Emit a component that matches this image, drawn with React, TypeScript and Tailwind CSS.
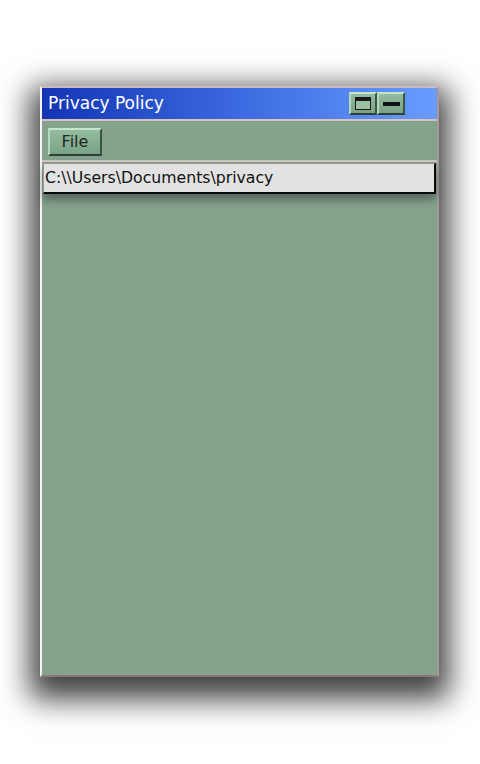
import React from 'react';

// Bevelled green button used in title bar and toolbar
const Bevel: React.FC<{ children: React.ReactNode; className?: string }> = ({ children, className }) => (
  <div
    className={`flex items-center justify-center bg-gradient-to-b from-[#94bca0] to-[#7aa286] border-2 border-t-[#c4e4cc] border-l-[#b4d8bc] border-r-[#3c5444] border-b-[#2c4034] ${className}`}
  >
    {children}
  </div>
);

export default function App() {
  return (
    <div className="w-[480px] h-[764px] bg-white pt-[86px] pl-[40px] font-['DejaVu_Sans',sans-serif]">
      <div className="w-[399px] h-[591px] flex flex-col bg-[#84a28c] border-2 border-t-[#cbbcbc] border-l-[#f4f4f4] border-r-[#a89a9a] border-b-[#8a7878] shadow-[0_12px_28px_10px_rgba(0,0,0,0.75)]">
        {/* Title bar */}
        <div className="h-[33px] flex items-center justify-between pl-[6px] pr-[32px] bg-gradient-to-r from-[#1434b4] via-[#3c6ae0] to-[#6a9cff] border-b-2 border-[#d6c4c4]">
          <span className="text-white text-[17px] leading-none">Privacy Policy</span>
          <div className="flex">
            <Bevel className="w-[28px] h-[23px]">
              <div className="w-[16px] h-[13px] border border-[#1a1a1a] border-t-[4px] bg-[#9cc0a4]" />
            </Bevel>
            <Bevel className="w-[28px] h-[23px]">
              <div className="w-[17px] h-[4px] bg-[#111]" />
            </Bevel>
          </div>
        </div>

        {/* Toolbar */}
        <div className="h-[41px] flex items-center pl-[6px] pt-[2px] border-b-2 border-[#d2c4c4]">
          <Bevel className="w-[54px] h-[28px]">
            <span className="text-[16px] text-[#1c2a20] leading-none">File</span>
          </Bevel>
        </div>

        {/* Path field */}
        <div className="mx-[1px] mt-[1px] h-[31px] flex items-center pl-[1px] bg-[#e2e2e2] border border-t-[#9a9a9a] border-l-[#9a9a9a] border-r-2 border-b-2 border-r-[#0a0a0a] border-b-[#0a0a0a] shadow-[0_6px_8px_rgba(0,0,0,0.35)]">
          <span className="text-[15.7px] text-[#111] leading-none">C:\\Users\Documents\privacy</span>
        </div>

        <div className="flex-1" />
      </div>
    </div>
  );
}
